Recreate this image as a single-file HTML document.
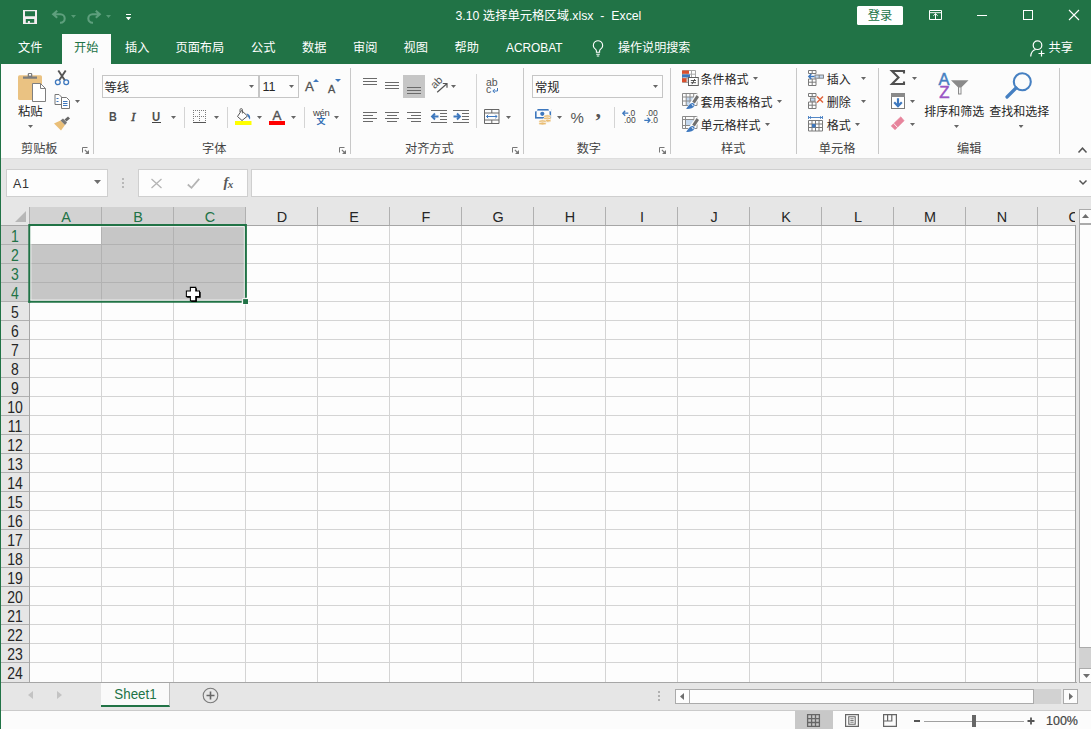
<!DOCTYPE html>
<html lang="zh-CN">
<head>
<meta charset="utf-8">
<title>3.10 选择单元格区域.xlsx - Excel</title>
<style>
*{box-sizing:border-box;margin:0;padding:0}
html,body{width:1091px;height:729px;overflow:hidden}
body{position:relative;background:#e6e6e6;font-family:"Liberation Sans","Noto Sans CJK SC",sans-serif;font-size:12px;color:#262626}
.abs{position:absolute}
svg{position:absolute;overflow:visible}
/* title + tabs */
#green{left:0;top:0;width:1091px;height:64px;background:#217346}
#lborder{left:0;top:0;width:1px;height:729px;background:#217346}
#title{left:455.5px;top:5.5px;color:#fff;font-size:12.3px;line-height:20px;white-space:pre}
.tab{position:absolute;top:38px;height:20px;line-height:20px;color:#fff;font-size:12.2px;white-space:nowrap}
#tabon{left:62px;top:34px;width:49px;height:30px;background:#fcfcfc}
#login{left:857px;top:6px;width:46px;height:19px;background:#fff;color:#217346;text-align:center;line-height:20.5px;font-size:12.3px;border-radius:1.5px}
/* ribbon */
#ribbon{left:1px;top:64px;width:1090px;height:95px;background:#fcfcfc;border-bottom:1px solid #dedede}
.ln{position:absolute;height:1px;background:#6a6a6a}
.sep{position:absolute;top:68px;width:1px;height:86px;background:#c8c8c8}
.glabel{position:absolute;top:139.5px;height:18px;line-height:18px;font-size:12.2px;color:#444;white-space:nowrap}
.rt{position:absolute;height:18px;line-height:18px;font-size:12.2px;color:#262626;white-space:nowrap}
.dd{position:absolute;width:5px;height:3px;background:#666;clip-path:polygon(0 0,100% 0,50% 100%)}
.box{position:absolute;background:#fdfdfd;border:1px solid #c6c6c6}
/* formula bar */
#namebox{left:6px;top:169px;width:102px;height:28px;background:#fdfdfd;border:1px solid #cfcfcf}
#fxbox{left:138px;top:169px;width:110px;height:28px;background:#fdfdfd;border:1px solid #cfcfcf}
#fbar{left:251px;top:169px;width:840px;height:28px;background:#fdfdfd;border:1px solid #cfcfcf;border-right:0}
/* grid */
#grid{left:30px;top:226px;width:1046px;height:456px;background:#fdfdfd}
.colh{position:absolute;top:207px;height:18px;line-height:20.500px;width:72px;text-align:center;font-size:15.500px;color:#262626;transform:scaleX(.93)}
.rowh{position:absolute;left:1px;width:28px;height:19px;line-height:19.800px;text-align:center;font-size:15.400px;color:#262626;transform:translateY(.5px) scale(.91,1.06)}
.vl{position:absolute;top:226px;width:1px;height:456px;background:#d4d4d4}
.hl{position:absolute;left:29px;height:1px;width:1047px;background:#d4d4d4}
.chs{position:absolute;top:207px;width:1px;height:18px;background:#b0b0b0}
.rhs{position:absolute;left:1px;width:28px;height:1px;background:#b0b0b0}
</style>
</head>
<body>
<div id="green" class="abs"></div>
<div id="title" class="abs">3.10 选择单元格区域.xlsx  -  Excel</div>
<div id="login" class="abs">登录</div>
<div id="tabon" class="abs"></div>
<!-- quick access toolbar -->
<svg style="left:23px;top:10px" width="14" height="14" viewBox="0 0 14 14"><path d="M0 0h14v14h-14z M2 1.300v4.900h10v-4.900z M2.800 9v3.800h8.400v-3.800z" fill="#f4eef0" fill-rule="evenodd"/><rect x="4.900" y="11" width="2" height="2" fill="#f4eef0"/></svg>
<svg style="left:52px;top:10px" width="14" height="14" viewBox="0 0 14 14"><path d="M5.200 0.800 L1.200 4.300 L5.200 7.800 M1.800 4.300 H8.500 a4.200 4.200 0 0 1 0 8.400 H8" fill="none" stroke="#5e9f7d" stroke-width="2.100" stroke-linejoin="miter"/></svg>
<div class="dd" style="left:71px;top:15px;background:#559a75"></div>
<svg style="left:87px;top:10px" width="14" height="14" viewBox="0 0 14 14"><path d="M8.800 0.800 L12.800 4.300 L8.800 7.800 M12.200 4.300 H5.500 a4.200 4.200 0 0 0 0 8.400 H6" fill="none" stroke="#5e9f7d" stroke-width="2.100" stroke-linejoin="miter"/></svg>
<div class="dd" style="left:106px;top:15px;background:#559a75"></div>
<div class="abs" style="left:126px;top:14px;width:5px;height:1.300px;background:#fff"></div>
<div class="dd" style="left:125.800px;top:17px;width:5.400px;height:3.300px;background:#fff"></div>
<!-- window buttons -->
<svg style="left:929px;top:10px" width="13" height="10" viewBox="0 0 13 10"><path d="M0.500 0.500h12v9h-12zM0.500 2.700h12" fill="none" stroke="#fff" stroke-width="1"/><path d="M6.500 3.500v6M4.300 5.800L6.500 3.700L8.700 5.800" fill="none" stroke="#fff" stroke-width="1"/></svg>
<div class="abs" style="left:977px;top:15px;width:10px;height:1px;background:#fff"></div>
<div class="abs" style="left:1023px;top:10px;width:10px;height:10px;border:1px solid #fff"></div>
<svg style="left:1069px;top:10px" width="10" height="10" viewBox="0 0 10 10"><path d="M0 0L10 10M10 0L0 10" stroke="#fff" stroke-width="1.1"/></svg>
<!-- tabs -->
<div class="tab" style="left:18px">文件</div>
<div class="tab" style="left:74px;color:#217346">开始</div>
<div class="tab" style="left:125px">插入</div>
<div class="tab" style="left:175.5px">页面布局</div>
<div class="tab" style="left:251px">公式</div>
<div class="tab" style="left:302px">数据</div>
<div class="tab" style="left:353px">审阅</div>
<div class="tab" style="left:403.5px">视图</div>
<div class="tab" style="left:454.5px">帮助</div>
<div class="tab" style="left:506px;font-size:11.9px">ACROBAT</div>
<svg style="left:592px;top:40px" width="12" height="17" viewBox="0 0 12 17"><path d="M6 0.7a4.6 4.6 0 0 0-2.6 8.4c.6.5 1 1.2 1 2v1.2h3.200v-1.2c0-.8.4-1.500 1-2A4.600 4.600 0 0 0 6 .7z" fill="none" stroke="#fff" stroke-width="1.1"/><path d="M4.200 14.200h3.600M4.800 16h2.400" stroke="#fff" stroke-width="1.1"/></svg>
<div class="tab" style="left:618px;font-size:12.05px">操作说明搜索</div>
<svg style="left:1030px;top:40px" width="16" height="18" viewBox="0 0 16 18"><circle cx="7.5" cy="5.200" r="4.300" fill="none" stroke="#fff" stroke-width="1.2"/><path d="M0.700 16.500c.3-3.800 2.500-6.500 5-7" fill="none" stroke="#fff" stroke-width="1.2"/><path d="M11.500 10.500v6M8.500 13.500h6" stroke="#fff" stroke-width="1.2"/></svg>
<div class="tab" style="left:1048.5px">共享</div>

<div id="ribbon" class="abs"></div>
<!-- clipboard group -->
<svg style="left:18px;top:72px" width="29" height="31" viewBox="0 0 29 31"><rect x="0" y="3.300" width="24" height="24.700" rx="1.500" fill="#eac282"/><path d="M5 6.800V4.600h4.700V2.300a1.300 1.300 0 0 1 1.300-1.300h2a1.300 1.300 0 0 1 1.300 1.300v2.300h4.700v2.200z" fill="#7d7d7d"/><rect x="11" y="2" width="2" height="1.600" fill="#fcfcfc"/><path d="M14.500 11.500h8l5 5v13h-13z" fill="#fff" stroke="#7f7f7f" stroke-width="1"/><path d="M22.500 11.500v5h5" fill="none" stroke="#7f7f7f" stroke-width="1"/></svg>
<div class="rt" style="left:18px;top:103px;font-size:12.300px">粘贴</div>
<div class="dd" style="left:28px;top:125px"></div>
<svg style="left:54px;top:70px" width="16" height="16" viewBox="0 0 16 16"><path d="M4.300 0.500L10.800 10.200M11.700 0.500L5.200 10.200" stroke="#555" stroke-width="1.900" fill="none"/><circle cx="3.800" cy="12.300" r="2.400" fill="none" stroke="#3e78be" stroke-width="1.300"/><circle cx="12.200" cy="12.300" r="2.400" fill="none" stroke="#3e78be" stroke-width="1.300"/></svg>
<svg style="left:54px;top:94px" width="17" height="15" viewBox="0 0 17 15"><path d="M1 0.500h4l2.500 2.500v7.500h-6.500z" fill="#fff" stroke="#777" stroke-width="1"/><path d="M2.500 4.500h2M2.500 7.500h2" stroke="#3e78be" stroke-width="1"/><path d="M7.500 3.500h5l3 3v8h-8z" fill="#fff" stroke="#777" stroke-width="1"/><path d="M9 7.500h4.500M9 9.500h4.500M9 11.500h4.500" stroke="#3e78be" stroke-width="1"/></svg>
<div class="dd" style="left:75px;top:100px"></div>
<svg style="left:54px;top:116px" width="17" height="15" viewBox="0 0 17 15"><path d="M0 7.500L6.500 4.500L11 9L7 14.500z" fill="#eabf78"/><path d="M6.500 4.500L9 2.500L13 6.500L11 9z" fill="#777"/><path d="M10.500 3.500L14 0.500L16 2.500L12.500 5.500z" fill="#666"/></svg>
<div class="glabel" style="left:21px">剪贴板</div>
<svg style="left:82px;top:147px" width="7" height="7" viewBox="0 0 7 7"><path d="M0.500 5.500V0.500H5.500" fill="none" stroke="#777" stroke-width="1"/><path d="M2.800 2.800L5.500 5.500" fill="none" stroke="#777" stroke-width="1.100"/><path d="M7 3V7H3z" fill="#777"/></svg>
<div class="sep" style="left:93px"></div>
<!-- font group -->
<div class="box" style="left:102px;top:75px;width:157px;height:23px"></div>
<div class="box" style="left:259px;top:75px;width:40px;height:23px"></div>
<div class="rt" style="left:104.500px;top:79px;font-size:12.300px">等线</div>
<div class="dd" style="left:249px;top:85px"></div>
<div class="rt" style="left:262.500px;top:78px;font-size:12.500px">11</div>
<div class="dd" style="left:289px;top:85px"></div>
<div class="rt" style="left:305px;top:78px;font-size:13.300px;color:#505050;-webkit-text-stroke:0.3px #505050">A</div>
<svg style="left:313px;top:79px" width="6" height="3" viewBox="0 0 6 3"><path d="M0 3L3 0L6 3z" fill="#3e78be"/></svg>
<div class="rt" style="left:328px;top:79.500px;font-size:10.800px;color:#505050;-webkit-text-stroke:0.3px #505050">A</div>
<svg style="left:335px;top:79px" width="6" height="3" viewBox="0 0 6 3"><path d="M0 0L3 3L6 0z" fill="#3e78be"/></svg>
<div class="rt" style="left:108.500px;top:108px;font-size:12px;font-weight:bold;color:#505050;transform:scaleX(.9);transform-origin:left">B</div>
<div class="rt" style="left:131px;top:108px;font-style:italic;font-family:'Liberation Serif',serif;color:#444;font-size:13.500px;-webkit-text-stroke:0.3px #444">I</div>
<div class="rt" style="left:152px;top:108px;font-size:12.300px;color:#505050;font-weight:bold;transform:scaleX(.92);transform-origin:left">U</div>
<div class="abs" style="left:152px;top:122px;width:9px;height:1px;background:#444"></div>
<div class="dd" style="left:171px;top:116px"></div>
<div class="abs" style="left:184px;top:107px;width:1px;height:21px;background:#d4d4d4"></div>
<svg style="left:193px;top:110px" width="13" height="13" viewBox="0 0 13 13"><path d="M0 0.500h13M0 6.500h13M0.500 0v12M6.500 0v12M12.500 0v12" fill="none" stroke="#7a7a7a" stroke-width="1" stroke-dasharray="1 1" shape-rendering="crispEdges"/><path d="M0 12.500h13" stroke="#555" stroke-width="1"/></svg>
<div class="dd" style="left:214px;top:116px"></div>
<div class="abs" style="left:227px;top:107px;width:1px;height:21px;background:#d4d4d4"></div>
<svg style="left:235px;top:108px" width="17" height="17" viewBox="0 0 17 17"><path d="M6.500 2.500L12.500 8L7 12.500L2.500 8.500z" fill="#fff" stroke="#555" stroke-width="1"/><path d="M5 4V1.800a1.200 1.200 0 0 1 2.400 0V5.500" fill="none" stroke="#555" stroke-width="0.900"/><path d="M11.500 5.500c2.800.4 4.300 2.800 3.500 6-1.300-1.200-1.800-3-3.500-6z" fill="#3e78be"/><rect x="0" y="13" width="16.500" height="4" fill="#ffff00"/></svg>
<div class="dd" style="left:257px;top:116px"></div>
<div class="rt" style="left:272.500px;top:107.300px;font-size:13.300px;color:#505050;-webkit-text-stroke:0.4px #505050">A</div>
<div class="abs" style="left:269px;top:121px;width:16px;height:4px;background:#ff0000"></div>
<div class="dd" style="left:291px;top:116px"></div>
<div class="abs" style="left:304px;top:107px;width:1px;height:21px;background:#d4d4d4"></div>
<div class="rt" style="left:313px;top:104px;font-size:9.500px;color:#444;letter-spacing:-0.300px">wén</div>
<div class="rt" style="left:316.500px;top:112.300px;font-size:9px;color:#2f6cb3;font-weight:bold">文</div>
<div class="dd" style="left:334px;top:116px"></div>
<div class="glabel" style="left:202px">字体</div>
<svg style="left:339px;top:147px" width="7" height="7" viewBox="0 0 7 7"><path d="M0.500 5.500V0.500H5.500" fill="none" stroke="#777" stroke-width="1"/><path d="M2.800 2.800L5.500 5.500" fill="none" stroke="#777" stroke-width="1.100"/><path d="M7 3V7H3z" fill="#777"/></svg>
<div class="sep" style="left:350px"></div>
<!-- alignment group -->
<div class="ln" style="left:363px;top:78px;width:14px"></div><div class="ln" style="left:363px;top:81px;width:14px"></div><div class="ln" style="left:363px;top:84px;width:14px"></div>
<div class="ln" style="left:385px;top:82px;width:14px"></div><div class="ln" style="left:385px;top:85px;width:14px"></div><div class="ln" style="left:385px;top:88px;width:14px"></div>
<div class="abs" style="left:403px;top:75px;width:22px;height:23px;background:#c6c6c6"></div>
<div class="ln" style="left:407px;top:87px;width:14px"></div><div class="ln" style="left:407px;top:90px;width:14px"></div><div class="ln" style="left:407px;top:93px;width:14px"></div>
<svg style="left:430px;top:77px" width="18" height="17" viewBox="0 0 18 17"><text x="0" y="0" transform="translate(4.800 12.300) rotate(-45)" font-family="Liberation Sans, sans-serif" font-size="10.800" fill="#555">ab</text><path d="M7.200 15.300L16.800 6.700M12.800 6.500h4.200v4.200" fill="none" stroke="#555" stroke-width="1.200"/></svg>
<div class="dd" style="left:451px;top:85px"></div>
<div class="ln" style="left:363px;top:112px;width:14px"></div><div class="ln" style="left:363px;top:115px;width:10px"></div><div class="ln" style="left:363px;top:118px;width:14px"></div><div class="ln" style="left:363px;top:121px;width:10px"></div>
<div class="ln" style="left:385px;top:112px;width:14px"></div><div class="ln" style="left:387px;top:115px;width:10px"></div><div class="ln" style="left:385px;top:118px;width:14px"></div><div class="ln" style="left:387px;top:121px;width:10px"></div>
<div class="ln" style="left:407px;top:112px;width:14px"></div><div class="ln" style="left:411px;top:115px;width:10px"></div><div class="ln" style="left:407px;top:118px;width:14px"></div><div class="ln" style="left:411px;top:121px;width:10px"></div>
<div class="ln" style="left:431px;top:110px;width:16px"></div><div class="ln" style="left:440px;top:113px;width:7px"></div><div class="ln" style="left:440px;top:116px;width:7px"></div><div class="ln" style="left:440px;top:119px;width:7px"></div><div class="ln" style="left:431px;top:122px;width:16px"></div>
<svg style="left:431px;top:113px" width="8" height="7" viewBox="0 0 8 7"><path d="M7.500 3.500H1.500M4 0.500L1 3.500L4 6.500" fill="none" stroke="#3e78be" stroke-width="1.900"/></svg>
<div class="ln" style="left:453px;top:110px;width:16px"></div><div class="ln" style="left:462px;top:113px;width:7px"></div><div class="ln" style="left:462px;top:116px;width:7px"></div><div class="ln" style="left:462px;top:119px;width:7px"></div><div class="ln" style="left:453px;top:122px;width:16px"></div>
<svg style="left:453px;top:113px" width="8" height="7" viewBox="0 0 8 7"><path d="M0.500 3.500H6.500M4 0.500L7 3.500L4 6.500" fill="none" stroke="#3e78be" stroke-width="1.900"/></svg>
<div class="abs" style="left:476px;top:74px;width:1px;height:54px;background:#d4d4d4"></div>
<div class="rt" style="left:486px;top:73px;font-size:10.500px;color:#555;line-height:18px;letter-spacing:-0.200px">ab</div>
<div class="rt" style="left:486px;top:80px;font-size:10.500px;color:#555;line-height:18px">c</div>
<svg style="left:492px;top:88px" width="6" height="5" viewBox="0 0 6 5"><path d="M5.500 0v3H1M2.800 1L0.800 3L2.800 5" fill="none" stroke="#3e78be" stroke-width="1"/></svg>
<svg style="left:484px;top:109px" width="16" height="15" viewBox="0 0 16 15"><path d="M0.500 0.500h14.500v14h-14.500zM0.500 4h14.500M0.500 11h14.500M7.800 0.500v3.500M7.800 11v3.500" fill="none" stroke="#666" stroke-width="1"/><path d="M2.500 7.500h10.500M4.200 5.800L2.500 7.500L4.200 9.200M11.300 5.800L13 7.500L11.300 9.200" fill="none" stroke="#3e78be" stroke-width="1"/></svg>
<div class="dd" style="left:506px;top:116px"></div>
<div class="glabel" style="left:405px">对齐方式</div>
<svg style="left:512px;top:147px" width="7" height="7" viewBox="0 0 7 7"><path d="M0.500 5.500V0.500H5.500" fill="none" stroke="#777" stroke-width="1"/><path d="M2.800 2.800L5.500 5.500" fill="none" stroke="#777" stroke-width="1.100"/><path d="M7 3V7H3z" fill="#777"/></svg>
<div class="sep" style="left:523px"></div>
<!-- number group -->
<div class="box" style="left:532px;top:75px;width:131px;height:23px"></div>
<div class="rt" style="left:535px;top:78.500px;font-size:12.300px">常规</div>
<div class="dd" style="left:653px;top:85px"></div>
<svg style="left:535px;top:109px" width="17" height="16" viewBox="0 0 17 16"><rect x="0.800" y="0.800" width="14.500" height="8" fill="#fcfcfc" stroke="#3e78be" stroke-width="1.600"/><path d="M0 0h2.500a2.500 2.500 0 0 1-2.500 2.500zM16 0h-2.500a2.500 2.500 0 0 0 2.500 2.500z" fill="#fcfcfc"/><circle cx="7.300" cy="4.800" r="2.100" fill="#3e78be"/><g fill="#e9bd74" stroke="#fcfcfc" stroke-width="0.700"><ellipse cx="12.300" cy="7.300" rx="3.700" ry="1.500"/><ellipse cx="12.300" cy="9.500" rx="3.700" ry="1.500"/><ellipse cx="12.300" cy="11.700" rx="3.700" ry="1.500"/><ellipse cx="7.500" cy="12.300" rx="3.700" ry="1.500"/><ellipse cx="7.500" cy="14.500" rx="3.700" ry="1.500"/></g></svg>
<div class="dd" style="left:557px;top:116px"></div>
<div class="rt" style="left:570.500px;top:108.500px;font-size:15px;color:#555">%</div>
<div class="rt" style="left:595.500px;top:100.500px;font-size:22px;color:#555;font-weight:bold;font-family:'Liberation Serif',serif">,</div>
<div class="abs" style="left:614px;top:107px;width:1px;height:21px;background:#d4d4d4"></div>
<svg style="left:622px;top:109px" width="15" height="15" viewBox="0 0 15 15"><path d="M6.300 4.200H1M3.200 1.700L0.800 4.200L3.200 6.700" fill="none" stroke="#3e78be" stroke-width="1.300"/><text x="6.200" y="7" font-family="Liberation Sans, sans-serif" font-size="8.500" fill="#444">.0</text><text x="2" y="14" font-family="Liberation Sans, sans-serif" font-size="8.500" fill="#444">.00</text></svg>
<svg style="left:644px;top:109px" width="15" height="15" viewBox="0 0 15 15"><text x="2" y="7" font-family="Liberation Sans, sans-serif" font-size="8.500" fill="#444">.00</text><path d="M0.300 11.300H5.800M3.600 8.800L6 11.300L3.600 13.800" fill="none" stroke="#3e78be" stroke-width="1.300"/><text x="6.800" y="14" font-family="Liberation Sans, sans-serif" font-size="8.500" fill="#444">.0</text></svg>
<div class="glabel" style="left:576.700px">数字</div>
<svg style="left:659px;top:147px" width="7" height="7" viewBox="0 0 7 7"><path d="M0.500 5.500V0.500H5.500" fill="none" stroke="#777" stroke-width="1"/><path d="M2.800 2.800L5.500 5.500" fill="none" stroke="#777" stroke-width="1.100"/><path d="M7 3V7H3z" fill="#777"/></svg>
<div class="sep" style="left:670px"></div>
<!-- styles group -->
<svg style="left:682px;top:70px" width="17" height="16" viewBox="0 0 17 16"><path d="M0.500 0.500h13v12h-13zM5 0.500v12M9.500 0.500v8M0.500 4.200h13M0.500 8.200h9" fill="#fff" stroke="#a8a8a8" stroke-width="1"/><rect x="0" y="0.500" width="7" height="3.300" fill="#d9502f"/><rect x="0" y="4.400" width="8" height="3" fill="#3e78be"/><rect x="0" y="8.200" width="4.500" height="4" fill="#d9502f"/><rect x="6.500" y="7.500" width="9.800" height="8" fill="#fff" stroke="#606060" stroke-width="1"/><path d="M8.800 10.500h5.200M8.800 12.700h5.200M12.800 9L10 14.200" stroke="#444" stroke-width="0.900" fill="none"/></svg>
<div class="rt" style="left:700.500px;top:70.800px;font-size:12px">条件格式</div>
<div class="dd" style="left:753px;top:77px"></div>
<svg style="left:682px;top:93px" width="17" height="16" viewBox="0 0 17 16"><rect x="4.200" y="4" width="7.500" height="8" fill="#c5d9ef"/><path d="M0.500 0.500h14.500v12h-14.500zM0.500 4h14.500M0.500 8h14.500M4.200 0.500v12M8 0.500v12M11.700 0.500v12" fill="none" stroke="#8a8a8a" stroke-width="1"/><path d="M16.500 2L8 14.500" stroke="#fcfcfc" stroke-width="5.500" fill="none"/><path d="M14.600 2L17 4L12.800 10.500L10.200 8.800z" fill="#707070"/><path d="M3.800 15.800C6 14.600 6.300 11.200 9.300 10.200C11.600 9.600 13.200 11.200 12.400 13C11.300 15.600 7 16.100 3.800 15.800z" fill="#3e78be"/><path d="M9.600 11.300a1.800 1.800 0 0 1 1.500 1.900" fill="none" stroke="#fff" stroke-width="1"/></svg>
<div class="rt" style="left:700.500px;top:93.800px;font-size:12px">套用表格格式</div>
<div class="dd" style="left:777px;top:100px"></div>
<svg style="left:682px;top:116px" width="17" height="16" viewBox="0 0 17 16"><rect x="3.500" y="3.500" width="8.500" height="6" fill="#c5d9ef"/><path d="M0.500 0.500h14.500v12h-14.500zM0.500 3.500h14.500M0.500 9.500h14.500M3.500 0.500v12M12 0.500v12" fill="none" stroke="#8a8a8a" stroke-width="1"/><path d="M16.500 2L8 14.500" stroke="#fcfcfc" stroke-width="5.500" fill="none"/><path d="M14.600 2L17 4L12.800 10.500L10.200 8.800z" fill="#707070"/><path d="M3.800 15.800C6 14.600 6.300 11.200 9.300 10.200C11.600 9.600 13.200 11.200 12.400 13C11.300 15.600 7 16.100 3.800 15.800z" fill="#3e78be"/><path d="M9.600 11.300a1.800 1.800 0 0 1 1.500 1.900" fill="none" stroke="#fff" stroke-width="1"/></svg>
<div class="rt" style="left:700.500px;top:116.800px;font-size:12px">单元格样式</div>
<div class="dd" style="left:765px;top:123px"></div>
<div class="glabel" style="left:721px">样式</div>
<div class="sep" style="left:796px"></div>
<!-- cells group -->
<svg style="left:808px;top:70px" width="16" height="16" viewBox="0 0 16 16"><path d="M0.500 0.500h7.500v3h-7.500zM0.500 9h7.500v6.500h-7.500zM0.500 12.200h7.500M4.200 9v6.500M4.200 0.500v3" fill="#fff" stroke="#7a7a7a" stroke-width="1"/><rect x="7" y="5" width="8.500" height="3.200" fill="#c5d9ef" stroke="#7a7a7a" stroke-width="0.900"/><path d="M11.200 5v3.200" stroke="#7a7a7a" stroke-width="0.900"/><path d="M6.500 6.500H1M3.300 4L0.800 6.500L3.300 9" fill="none" stroke="#3e78be" stroke-width="1.400"/></svg>
<div class="rt" style="left:826.800px;top:70.800px;font-size:12px">插入</div>
<div class="dd" style="left:861px;top:77px"></div>
<svg style="left:808px;top:93px" width="16" height="16" viewBox="0 0 16 16"><path d="M0.500 0.500h7.500v3h-7.500zM0.500 9h7.500v6.500h-7.500zM0.500 12.200h7.500M4.200 9v6.500M4.200 0.500v3" fill="#fff" stroke="#7a7a7a" stroke-width="1"/><rect x="2.500" y="5" width="4.500" height="3.200" fill="#c5d9ef" stroke="#7a7a7a" stroke-width="0.900"/><path d="M9 3.500L15 9.500M15 3.500L9 9.500" stroke="#e0643c" stroke-width="1.500"/></svg>
<div class="rt" style="left:826.800px;top:93.800px;font-size:12px">删除</div>
<div class="dd" style="left:861px;top:100px"></div>
<svg style="left:808px;top:116px" width="16" height="16" viewBox="0 0 16 16"><path d="M0.500 0v3M14.500 0v3M1 1.500h13M3 0.300L1.500 1.500L3 2.700M12 0.300L13.500 1.500L12 2.700" fill="none" stroke="#3e78be" stroke-width="0.900"/><path d="M0.500 4.500h14v10.500h-14zM0.500 8h14M0.500 11.500h14M4 4.500v10.500M7.500 4.500v10.500M11 4.500v10.500" fill="#fff" stroke="#7a7a7a" stroke-width="1"/><rect x="4" y="8" width="3.500" height="3.500" fill="#3e78be"/></svg>
<div class="rt" style="left:826.800px;top:116.800px;font-size:12px">格式</div>
<div class="dd" style="left:855px;top:123px"></div>
<div class="glabel" style="left:818.800px">单元格</div>
<div class="sep" style="left:878px"></div>
<!-- editing group -->
<svg style="left:890px;top:70px" width="15" height="15" viewBox="0 0 15 15"><path d="M14 3.500V1H2L8.500 7.500L2 14H14V11.500" fill="none" stroke="#505050" stroke-width="2.100"/></svg>
<div class="dd" style="left:912px;top:77px"></div>
<svg style="left:891px;top:93px" width="14" height="16" viewBox="0 0 14 16"><rect x="0.500" y="0.500" width="13" height="15" fill="#fff" stroke="#7a7a7a" stroke-width="1"/><rect x="0" y="0" width="14" height="4" fill="#8a8a8a"/><path d="M7 5.300v7.700M3.200 9.300L7 13.200L10.800 9.300" fill="none" stroke="#3e78be" stroke-width="2.200"/></svg>
<div class="dd" style="left:910px;top:100px"></div>
<svg style="left:891px;top:117px" width="14" height="13" viewBox="0 0 14 13"><path d="M9.800 -0.200L13.100 3.700L4 12.800L0.200 8.900z" fill="#e7849c" stroke="#e7849c" stroke-width="0.600" stroke-linejoin="round"/><path d="M2.500 6.200L6.500 10.500" stroke="#fcfcfc" stroke-width="0.900"/></svg>
<div class="dd" style="left:910px;top:123px"></div>
<svg style="left:939px;top:73px" width="30" height="27" viewBox="0 0 30 27"><text x="-0.500" y="11.700" font-family="Liberation Sans, sans-serif" font-size="15" fill="#4680c2" stroke="#4680c2" stroke-width="0.450" transform="translate(0 11.700) scale(1.100 1.100) translate(0 -11.700)">A</text><text x="0.200" y="25.500" font-family="Liberation Sans, sans-serif" font-size="15" fill="#9a55c4" stroke="#9a55c4" stroke-width="0.450" transform="translate(0 25.500) scale(1.120 1.100) translate(0 -25.500)">Z</text><path d="M12 7.200h17.500l-7 7v7.300h-3.500v-7.300z" fill="#8a8a8a"/><rect x="20.100" y="14.500" width="1.400" height="6" fill="#fcfcfc"/></svg>
<div class="rt" style="left:924.200px;top:103px;font-size:12px">排序和筛选</div>
<div class="dd" style="left:954px;top:125px"></div>
<svg style="left:1004px;top:71px" width="30" height="30" viewBox="0 0 30 30"><circle cx="18.300" cy="10.700" r="8.500" fill="none" stroke="#4680c2" stroke-width="2.100"/><path d="M12 17L3 26" stroke="#4680c2" stroke-width="3.200" stroke-linecap="round"/></svg>
<div class="rt" style="left:989.200px;top:103px;font-size:12px">查找和选择</div>
<div class="dd" style="left:1018.500px;top:125px"></div>
<div class="glabel" style="left:957px">编辑</div>
<div class="sep" style="left:1059px"></div>
<svg style="left:1078px;top:147px" width="9" height="6" viewBox="0 0 9 6"><path d="M0.500 5.500L4.500 1.200L8.500 5.500" fill="none" stroke="#555" stroke-width="1.500"/></svg>

<!-- formula bar -->
<div id="namebox" class="abs"></div>
<div class="abs" style="left:13px;top:175px;height:18px;line-height:18px;font-size:12.500px;color:#333;letter-spacing:0.600px">A1</div>
<div class="dd" style="left:94px;top:180px;width:7px;height:4px;background:#6e6e6e"></div>
<div class="abs" style="left:122px;top:178px;width:2px;height:2px;background:#b8b8b8"></div>
<div class="abs" style="left:122px;top:182px;width:2px;height:2px;background:#b8b8b8"></div>
<div class="abs" style="left:122px;top:186px;width:2px;height:2px;background:#b8b8b8"></div>
<div id="fxbox" class="abs"></div>
<svg style="left:151px;top:179px" width="11" height="9" viewBox="0 0 11 9"><path d="M0.500 0L10.500 9M10.500 0L0.500 9" stroke="#b4b4b4" stroke-width="1.3"/></svg>
<svg style="left:187px;top:178px" width="13" height="11" viewBox="0 0 13 11"><path d="M0.800 6.500L4.500 9.800L12.200 0.800" fill="none" stroke="#b4b4b4" stroke-width="1.8"/></svg>
<div class="abs" style="left:223.500px;top:171.500px;height:20px;line-height:20px;font-family:'Liberation Serif',serif;font-style:italic;font-weight:bold;font-size:14.500px;color:#585858;letter-spacing:-0.500px">f<span style="font-size:11px;position:relative;top:1px">x</span></div>
<div id="fbar" class="abs"></div>
<svg style="left:1079px;top:180px" width="8" height="5" viewBox="0 0 8 5"><path d="M0.500 0.500L4 4L7.500 0.500" fill="none" stroke="#555" stroke-width="1.5"/></svg>

<div class="abs" style="left:1px;top:207px;width:1075px;height:19px;background:#e6e6e6"></div>
<div class="abs" style="left:30px;top:207px;width:215px;height:18px;background:#d2d2d2"></div>
<div class="abs" style="left:1px;top:226px;width:28px;height:76px;background:#d2d2d2"></div>
<svg style="left:15px;top:211px" width="11" height="11" viewBox="0 0 11 11"><path d="M11 0V11H0z" fill="#b7b7b7"/></svg>
<div id="grid" class="abs"></div>
<div class="abs" style="left:30px;top:226px;width:215px;height:75px;background:#c6c6c6"></div>
<div class="abs" style="left:30px;top:226px;width:71px;height:18px;background:#fdfdfd"></div>
<div class="colh" style="left:29.7px;color:#217346">A</div>
<div class="chs" style="left:101px"></div>
<div class="vl" style="left:101px;background:#b2b2b2;height:75px"></div>
<div class="vl" style="left:101px;top:301px;height:381px"></div>
<div class="colh" style="left:101.7px;color:#217346">B</div>
<div class="chs" style="left:173px"></div>
<div class="vl" style="left:173px;background:#b2b2b2;height:75px"></div>
<div class="vl" style="left:173px;top:301px;height:381px"></div>
<div class="colh" style="left:173.7px;color:#217346">C</div>
<div class="chs" style="left:245px"></div>
<div class="vl" style="left:245px"></div>
<div class="colh" style="left:245.7px">D</div>
<div class="chs" style="left:317px"></div>
<div class="vl" style="left:317px"></div>
<div class="colh" style="left:317.7px">E</div>
<div class="chs" style="left:389px"></div>
<div class="vl" style="left:389px"></div>
<div class="colh" style="left:389.7px">F</div>
<div class="chs" style="left:461px"></div>
<div class="vl" style="left:461px"></div>
<div class="colh" style="left:461.7px">G</div>
<div class="chs" style="left:533px"></div>
<div class="vl" style="left:533px"></div>
<div class="colh" style="left:533.7px">H</div>
<div class="chs" style="left:605px"></div>
<div class="vl" style="left:605px"></div>
<div class="colh" style="left:605.7px">I</div>
<div class="chs" style="left:677px"></div>
<div class="vl" style="left:677px"></div>
<div class="colh" style="left:677.7px">J</div>
<div class="chs" style="left:749px"></div>
<div class="vl" style="left:749px"></div>
<div class="colh" style="left:749.7px">K</div>
<div class="chs" style="left:821px"></div>
<div class="vl" style="left:821px"></div>
<div class="colh" style="left:821.7px">L</div>
<div class="chs" style="left:893px"></div>
<div class="vl" style="left:893px"></div>
<div class="colh" style="left:893.7px">M</div>
<div class="chs" style="left:965px"></div>
<div class="vl" style="left:965px"></div>
<div class="colh" style="left:965.7px">N</div>
<div class="chs" style="left:1037px"></div>
<div class="vl" style="left:1037px"></div>
<div class="abs" style="left:1037px;top:207px;width:38px;height:18px;overflow:hidden"><div class="colh" style="left:0.7px;top:0">O</div></div>
<div class="chs" style="left:29px"></div>
<div class="rowh" style="top:226px;color:#217346">1</div>
<div class="rhs" style="top:244px"></div>
<div class="hl" style="top:244px"></div>
<div class="abs" style="left:30px;top:244px;width:215px;height:1px;background:#b2b2b2"></div>
<div class="rowh" style="top:245px;color:#217346">2</div>
<div class="rhs" style="top:263px"></div>
<div class="hl" style="top:263px"></div>
<div class="abs" style="left:30px;top:263px;width:215px;height:1px;background:#b2b2b2"></div>
<div class="rowh" style="top:264px;color:#217346">3</div>
<div class="rhs" style="top:282px"></div>
<div class="hl" style="top:282px"></div>
<div class="abs" style="left:30px;top:282px;width:215px;height:1px;background:#b2b2b2"></div>
<div class="rowh" style="top:283px;color:#217346">4</div>
<div class="rhs" style="top:301px"></div>
<div class="hl" style="top:301px"></div>
<div class="rowh" style="top:302px">5</div>
<div class="rhs" style="top:320px"></div>
<div class="hl" style="top:320px"></div>
<div class="rowh" style="top:321px">6</div>
<div class="rhs" style="top:339px"></div>
<div class="hl" style="top:339px"></div>
<div class="rowh" style="top:340px">7</div>
<div class="rhs" style="top:358px"></div>
<div class="hl" style="top:358px"></div>
<div class="rowh" style="top:359px">8</div>
<div class="rhs" style="top:377px"></div>
<div class="hl" style="top:377px"></div>
<div class="rowh" style="top:378px">9</div>
<div class="rhs" style="top:396px"></div>
<div class="hl" style="top:396px"></div>
<div class="rowh" style="top:397px">10</div>
<div class="rhs" style="top:415px"></div>
<div class="hl" style="top:415px"></div>
<div class="rowh" style="top:416px">11</div>
<div class="rhs" style="top:434px"></div>
<div class="hl" style="top:434px"></div>
<div class="rowh" style="top:435px">12</div>
<div class="rhs" style="top:453px"></div>
<div class="hl" style="top:453px"></div>
<div class="rowh" style="top:454px">13</div>
<div class="rhs" style="top:472px"></div>
<div class="hl" style="top:472px"></div>
<div class="rowh" style="top:473px">14</div>
<div class="rhs" style="top:491px"></div>
<div class="hl" style="top:491px"></div>
<div class="rowh" style="top:492px">15</div>
<div class="rhs" style="top:510px"></div>
<div class="hl" style="top:510px"></div>
<div class="rowh" style="top:511px">16</div>
<div class="rhs" style="top:529px"></div>
<div class="hl" style="top:529px"></div>
<div class="rowh" style="top:530px">17</div>
<div class="rhs" style="top:548px"></div>
<div class="hl" style="top:548px"></div>
<div class="rowh" style="top:549px">18</div>
<div class="rhs" style="top:567px"></div>
<div class="hl" style="top:567px"></div>
<div class="rowh" style="top:568px">19</div>
<div class="rhs" style="top:586px"></div>
<div class="hl" style="top:586px"></div>
<div class="rowh" style="top:587px">20</div>
<div class="rhs" style="top:605px"></div>
<div class="hl" style="top:605px"></div>
<div class="rowh" style="top:606px">21</div>
<div class="rhs" style="top:624px"></div>
<div class="hl" style="top:624px"></div>
<div class="rowh" style="top:625px">22</div>
<div class="rhs" style="top:643px"></div>
<div class="hl" style="top:643px"></div>
<div class="rowh" style="top:644px">23</div>
<div class="rhs" style="top:662px"></div>
<div class="hl" style="top:662px"></div>
<div class="rowh" style="top:663px">24</div>
<div class="abs" style="left:1px;top:225px;width:1075px;height:1px;background:#a6a6a6"></div>
<div class="abs" style="left:29px;top:226px;width:1px;height:456px;background:#a6a6a6"></div>
<div class="abs" style="left:1075px;top:225px;width:1px;height:458px;background:#a0a0a0"></div>
<svg style="left:0;top:0" width="1091" height="729" viewBox="0 0 1091 729"><path d="M29.350 302.800V225.050H245.850V297.700" fill="none" stroke="#217346" stroke-width="2.100"/><path d="M28.300 301.750H241.700" fill="none" stroke="#217346" stroke-width="2.100"/><path d="M30.900 300.200V226.600H244.300V297.700" fill="none" stroke="#fff" stroke-opacity="0.750" stroke-width="1"/><path d="M30.400 300.100H241.700" fill="none" stroke="#fff" stroke-opacity="0.800" stroke-width="1"/><rect x="242.300" y="298.300" width="6.200" height="6.200" fill="#fff"/><rect x="243.100" y="299.100" width="4.900" height="4.900" fill="#217346"/></svg>
<div class="abs" style="left:1079px;top:209px;width:12px;height:474px;background:#d2d2d2"></div>
<div class="box" style="left:1079px;top:209px;width:13px;height:15px;border-color:#ababab"></div>
<svg style="left:1082px;top:214px" width="7" height="4" viewBox="0 0 7 4"><path d="M0 4L3.500 0L7 4z" fill="#6e6e6e"/></svg>
<div class="box" style="left:1079px;top:224px;width:13px;height:424px;border-color:#ababab"></div>
<div class="box" style="left:1079px;top:668px;width:13px;height:15px;border-color:#ababab"></div>
<svg style="left:1083px;top:674px" width="7" height="4" viewBox="0 0 7 4"><path d="M0 0L3.500 4L7 0z" fill="#6e6e6e"/></svg>
<svg style="left:185px;top:286px" width="17" height="17" viewBox="0 0 17 17"><path d="M5.900 1.900H10.200V5.600H14V10.100H10.200V14.200H5.900V10.100H1.900V5.600H5.900Z" transform="translate(1 1)" fill="#000" stroke="#000" stroke-width="1.400"/><path d="M5.900 1.900H10.200V5.600H14V10.100H10.200V14.200H5.900V10.100H1.900V5.600H5.900Z" fill="#fdfdfd" stroke="#000" stroke-width="2.100" paint-order="stroke"/></svg>
<!-- sheet tabs + scrollbars + status bar -->
<div class="abs" style="left:1px;top:683px;width:1090px;height:27px;background:#e6e6e6"></div>
<div class="abs" style="left:1px;top:682px;width:1076px;height:1px;background:#a6a6a6"></div>
<svg style="left:28px;top:691px" width="5" height="8" viewBox="0 0 5 8"><path d="M5 0L0 4L5 8z" fill="#c3c3c3"/></svg>
<svg style="left:57px;top:691px" width="5" height="8" viewBox="0 0 5 8"><path d="M0 0L5 4L0 8z" fill="#c3c3c3"/></svg>
<div class="abs" style="left:101px;top:683px;width:69px;height:24px;background:#fafafa;border-right:1px solid #bdbdbd;border-bottom:2px solid #217346"></div>
<div class="abs" style="left:101px;top:684px;width:69px;height:20px;line-height:20px;text-align:center;font-size:14.500px;color:#217346;transform:scaleX(.92)">Sheet1</div>
<svg style="left:202px;top:687px" width="17" height="17" viewBox="0 0 17 17"><circle cx="8.500" cy="8.500" r="7.300" fill="none" stroke="#7a7a7a" stroke-width="1.1"/><path d="M8.500 4.500v8M4.500 8.500h8" stroke="#666" stroke-width="1.6"/></svg>
<div class="abs" style="left:658px;top:691px;width:2px;height:2px;background:#b0b0b0"></div>
<div class="abs" style="left:658px;top:695px;width:2px;height:2px;background:#b0b0b0"></div>
<div class="abs" style="left:658px;top:699px;width:2px;height:2px;background:#b0b0b0"></div>
<!-- horizontal scrollbar -->
<div class="abs" style="left:675px;top:689px;width:403px;height:15px;background:#d2d2d2"></div>
<div class="box" style="left:675px;top:689px;width:15px;height:15px;border-color:#ababab"></div>
<svg style="left:680px;top:693px" width="4" height="7" viewBox="0 0 4 7"><path d="M4 0L0 3.500L4 7z" fill="#6e6e6e"/></svg>
<div class="box" style="left:689px;top:689px;width:345px;height:15px;border-color:#ababab"></div>
<div class="abs" style="left:1061px;top:689px;width:3px;height:15px;background:#e6e6e6"></div>
<div class="box" style="left:1063px;top:689px;width:15px;height:15px;border-color:#ababab"></div>
<svg style="left:1069px;top:693px" width="4" height="7" viewBox="0 0 4 7"><path d="M0 0L4 3.500L0 7z" fill="#6e6e6e"/></svg>
<!-- status bar -->
<div class="abs" style="left:1px;top:710px;width:1090px;height:19px;background:#fcfcfc;border-top:1px solid #cbcbcb"></div>
<div class="abs" style="left:795px;top:711px;width:38px;height:18px;background:#c8c8c8"></div>
<svg style="left:807px;top:714px" width="13" height="13" viewBox="0 0 13 13"><path d="M0.600 0.600h11.800v11.800h-11.800zM0.600 4.600h11.800M0.600 8.500h11.800M4.600 0.600v11.800M8.500 0.600v11.800" fill="none" stroke="#666" stroke-width="1.300"/></svg>
<svg style="left:845px;top:714px" width="14" height="13" viewBox="0 0 14 13"><path d="M0.600 0.600h12.800v11.800h-12.800z" fill="none" stroke="#666" stroke-width="1.200"/><path d="M3.800 2.800h6.400v7.400h-6.400z" fill="none" stroke="#666" stroke-width="1.100"/><path d="M5.300 4.800h3.400M5.300 6.500h3.400M5.300 8.200h3.400" fill="none" stroke="#666" stroke-width="0.900"/></svg>
<svg style="left:883px;top:714px" width="14" height="13" viewBox="0 0 14 13"><path d="M0.600 0.600h12.800v11.800h-12.800z M0.600 7h8.200v-6.400 M4.600 0.600v6.400" fill="none" stroke="#666" stroke-width="1.200"/></svg>
<div class="abs" style="left:914px;top:720px;width:6px;height:2px;background:#555"></div>
<div class="abs" style="left:924px;top:721px;width:100px;height:1px;background:#a0a0a0"></div>
<div class="abs" style="left:972px;top:715px;width:4px;height:12px;background:#666"></div>
<svg style="left:1027px;top:717px" width="8" height="8" viewBox="0 0 8 8"><path d="M4 0.500v7M0.500 4h7" stroke="#555" stroke-width="1.800"/></svg>
<div class="abs" style="left:1040px;top:711.500px;width:44px;height:18px;line-height:18px;font-size:12.500px;color:#444;text-align:center;-webkit-text-stroke:0.200px #444">100%</div>

<div id="lborder" class="abs"></div>
</body>
</html>
